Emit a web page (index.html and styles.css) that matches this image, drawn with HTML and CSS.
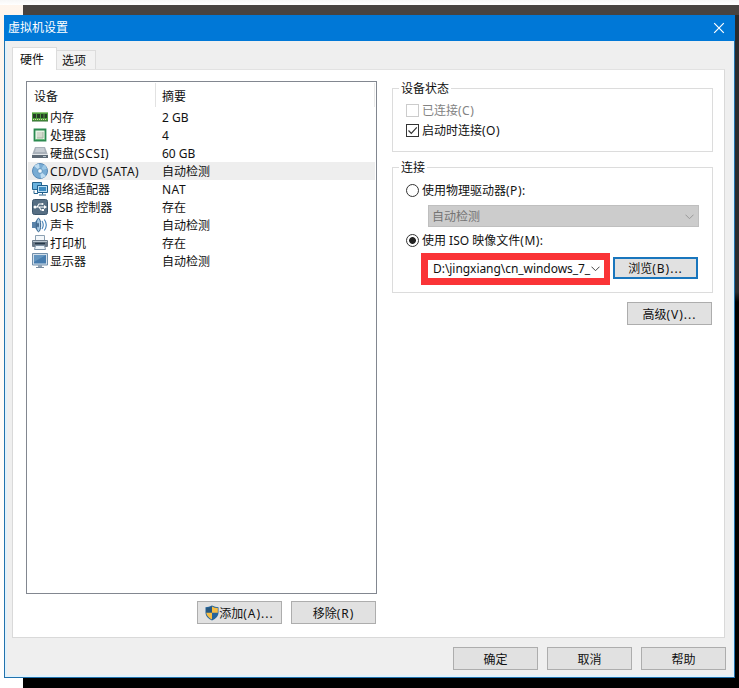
FILE: index.html
```html
<!DOCTYPE html>
<html lang="zh-CN">
<head>
<meta charset="utf-8">
<title>虚拟机设置</title>
<link rel="stylesheet" href="styles.css">
</head>
<body>
<main class="desktop">
<section class="window">
  <header class="titlebar"><h1>虚拟机设置</h1>
    <svg class="close" width="12" height="12" viewBox="0 0 12 12"><path d="M1.2 1.2l9.6 9.6M10.8 1.2l-9.6 9.6" stroke="#fff" stroke-width="1.2"/></svg>
  </header>
  <nav class="tabs"><span class="tab active">硬件</span><span class="tab">选项</span></nav>
  <div class="page">
    <div class="left">
      <div class="list">
        <div class="head"><span class="name">设备</span><span class="summary">摘要</span></div>
        <div class="row"><svg width="16" height="16" viewBox="0 0 16 16"><path d="M0 3h16v9H0z" fill="#4f9d3e"/><path d="M0 3h16v1H0z" fill="#8fc77b"/><path d="M1 5h3v4H1zM5 5h3v4H5zM9 5h2.500v4H9zM12.500 5H15v4h-2.500z" fill="#253c25"/><path d="M1 10.500h14" stroke="#d3dca0" stroke-dasharray="1 1"/><path d="M0 12h16" stroke="#2f6a2e"/></svg><span class="name">内存</span><span class="summary">2 GB</span></div>
        <div class="row"><svg width="16" height="16" viewBox="0 0 16 16"><path d="M2.500 2.500h11v11h-11z" fill="#e8f3e5" stroke="#2b8a50" stroke-width="1.800"/><path d="M5 5h6v6H5z" fill="#d3dacd"/><path d="M5 11h6V5" fill="none" stroke="#a7b5a3"/><path d="M3 12.500h10" stroke="#65b879"/></svg><span class="name">处理器</span><span class="summary">4</span></div>
        <div class="row"><svg width="16" height="16" viewBox="0 0 16 16"><path d="M3 2h10l3 8H0z" fill="#a9b1ba"/><path d="M4 3h8l1 4H3z" fill="#c5cbd2"/><path d="M0 9h16v4H0z" fill="#5d6975"/><path d="M0 9.500h16" stroke="#e2e6e9"/><path d="M11 11.500h3" stroke="#bac8d1"/></svg><span class="name">硬盘<b>(SCSI)</b></span><span class="summary">60 GB</span></div>
        <div class="row selected"><svg width="16" height="16" viewBox="0 0 16 16"><circle cx="8" cy="8" r="7.500" fill="#79acd4" stroke="#5788b4"/><path d="M8 8L2 3A8 8 0 0 1 7 .8zM8 8l6 5a8 8 0 0 1-5 2.300z" fill="#bedcf1"/><path d="M8 8l4-6.500a8 8 0 0 1 3 4z" fill="#9bc7e6"/><circle cx="8" cy="8" r="2.500" fill="#d6e7f3" stroke="#6699c1"/><circle cx="8" cy="8" r="1" fill="#fff"/></svg><span class="name"><b>CD/DVD (SATA)</b></span><span class="summary">自动检测</span></div>
        <div class="row"><svg width="16" height="16" viewBox="0 0 16 16"><path d="M.5 1.500h9v7h-9z" fill="#6bb3df" stroke="#26658f"/><path d="M2 12.500v-3M2 12.500h4" fill="none" stroke="#26658f"/><path d="M5.500 4.500h10v7h-10z" fill="#b9ddf2" stroke="#1f5f8d"/><path d="M7 6h7v4H7z" fill="#3e8cc1"/><path d="M10.500 12v1.500M7 14h7" stroke="#27618a"/></svg><span class="name">网络适配器</span><span class="summary"><b>NAT</b></span></div>
        <div class="row"><svg width="16" height="16" viewBox="0 0 16 16"><rect x=".5" y=".5" width="15" height="15" rx="2" fill="#566e83" stroke="#3c566c"/><path d="M2 8h11M5 8l2-3h3M7 8l2 3h2" fill="none" stroke="#fff" stroke-width="1.100"/><path d="M12 6l3 2-3 2z" fill="#fff"/><circle cx="3" cy="8" r="1.500" fill="#fff"/><circle cx="10.500" cy="5" r="1" fill="#fff"/><path d="M10 10h2v2h-2z" fill="#fff"/></svg><span class="name">USB 控制器</span><span class="summary">存在</span></div>
        <div class="row"><svg width="16" height="16" viewBox="0 0 16 16"><path d="M0 5h3l4-4v14l-4-4H0z" fill="#5a83a9"/><ellipse cx="6.500" cy="8" rx="2.200" ry="6.700" fill="#a9cbe5" stroke="#35648e"/><ellipse cx="6" cy="8" rx=".8" ry="2.500" fill="#2c5077"/><path d="M10 4q2.500 4 0 8M12.300 2.500q4 5.500 0 11" fill="none" stroke="#4381b8" stroke-width="1.100"/></svg><span class="name">声卡</span><span class="summary">自动检测</span></div>
        <div class="row"><svg width="16" height="16" viewBox="0 0 16 16"><path d="M3.500.5h9v5h-9z" fill="#f3f7fa" stroke="#8ba0b2"/><rect y="5" width="16" height="7" rx="1" fill="#6a7988"/><path d="M1 6.500h14" stroke="#b8c4ce"/><path d="M3 8.500h10" stroke="#25384a" stroke-width="1.500"/><path d="M3.500 10.500h9l1 4h-11z" fill="#edf4fa" stroke="#7c91a5"/></svg><span class="name">打印机</span><span class="summary">存在</span></div>
        <div class="row"><svg width="16" height="16" viewBox="0 0 16 16"><path d="M.5.500h15v11.500H.5z" fill="#d2dfeb" stroke="#718fab"/><path d="M2 2h12v8.500H2z" fill="#467cae"/><path d="M2 2h12L2 9z" fill="#6495c0"/><path d="M6 12h4v2H6z" fill="#8fa2b5"/><path d="M4 14.500h8" stroke="#758a9e"/></svg><span class="name">显示器</span><span class="summary">自动检测</span></div>
      </div>
      <div class="actions"><button><svg width="14" height="16" viewBox="0 0 14 16"><path d="M7 .5Q4 2.300.5 2.300V8Q.8 13 7 15.500 13.200 13 13.500 8V2.300Q10 2.300 7 .5z" fill="#25649b"/><path d="M7 1.500v6.200H1.200V3Q4.500 3 7 1.500z" fill="#26577e"/><path d="M7 1.500v6.200h5.800V3Q9.500 3 7 1.500zM7 7.700v6.800Q2 12 1.200 7.700z" fill="#f6bd45"/></svg><span>添加<b class="wide">(A)...</b></span></button><button><span>移除<b class="wide">(R)</b></span></button></div>
    </div>
    <div class="right">
      <div class="group status"><span class="legend">设备状态</span>
        <div class="option disabled"><i class="check"></i><span>已连接<b>(C)</b></span></div>
        <div class="option"><i class="check"><svg width="11" height="11" viewBox="0 0 11 11"><path d="M1.500 5.500L4.300 8.300 9.800 2.300" fill="none" stroke="#333" stroke-width="1.200"/></svg></i><span>启动时连接<b>(O)</b></span></div>
      </div>
      <div class="group connection"><span class="legend">连接</span>
        <div class="option"><i class="radio"></i><span>使用物理驱动器<b>(P):</b></span></div>
        <div class="select off"><span>自动检测</span><svg width="9" height="6" viewBox="0 0 9 6"><path d="M.5.7l4 4 4-4" fill="none" stroke="#999"/></svg></div>
        <div class="option iso"><i class="radio on"></i><span>使用 ISO 映像文件<b>(M):</b></span></div>
        <div class="isoline"><div class="highlight"><div class="select"><span class="path">D:\jingxiang\cn_windows_7_</span><svg width="9" height="6" viewBox="0 0 9 6"><path d="M.5.7l4 4 4-4" fill="none" stroke="#444"/></svg></div></div><button class="focus"><span>浏览<b class="wide">(B)...</b></span></button></div>
      </div>
      <button class="advanced"><span>高级<b class="wide">(V)...</b></span></button>
    </div>
  </div>
  <footer><button>确定</button><button>取消</button><button>帮助</button></footer>
</section>
</main>
</body>
</html>
```
FILE: styles.css
```css
* { box-sizing: border-box; }
body { margin: 0; font: 12px/18px "Noto Sans", "Noto Sans CJK SC", sans-serif; color: #111; }
svg { display: block; flex: none; }
b { font-weight: 400; letter-spacing: .5px; }
b.wide { letter-spacing: 1px; }
.desktop {
  width: 739px; height: 688px; padding: 15px 4px 10px; overflow: hidden;
  background:
    linear-gradient(#f7f7f7, #fff) 0 0 / 739px 5px no-repeat,
    linear-gradient(#fff5ec, #fff) 0 0 / 23px 688px no-repeat,
    linear-gradient(#484340 0 15px, #292b2d 15px 292px, #000 302px);
}
.window { width: 731px; height: 663px; background: #efefef; border: 1px solid #2172ad; border-top: 0; box-shadow: inset 0 0 0 2px #e1f1fb; }
.titlebar { display: flex; align-items: center; justify-content: space-between; height: 26px; margin: 0 -1px; padding: 0 10px 0 4px; background: #0078d7; color: #fff; }
h1 { margin: 0; font: inherit; }
.tabs { display: flex; align-items: flex-end; height: 28px; margin-left: 7px; }
.tab { height: 19px; width: 39px; padding: 0 5px; border: 1px solid #dcdcdc; border-width: 1px 1px 0 0; background: #f2f2f2; line-height: 20px; }
.tab.active { position: relative; width: 45px; height: 23px; margin-bottom: -1px; padding: 0 7px; border-left-width: 1px; background: #fff; line-height: 23px; }
.page { display: flex; gap: 15px; width: 713px; height: 569px; margin-left: 7px; padding: 11px 11px 0 13px; background: #fff; border: 1px solid #d9d9d9; border-top-color: #e2e2e2; }
.list { width: 351px; height: 513px; padding: 0 1px; border: 1px solid #828790; }
.head { display: flex; height: 26px; padding: 1px 0 1px 6px; line-height: 27px; }
.head .name { width: 122px; border-right: 1px solid #e2e2e2; }
.head .summary { flex: 1; padding-left: 6px; border-right: 1px solid #e8e8e8; }
.row { display: flex; align-items: center; height: 18px; padding-left: 4px; }
.row .name { width: 111px; margin-left: 2px; margin-right: 1px; white-space: nowrap; }
.row span { line-height: 19px; }
.row.selected { background: #eee; }
.actions { display: flex; justify-content: flex-end; gap: 9px; margin: 7px 1px 0 0; }
button { display: flex; align-items: center; justify-content: center; width: 85px; height: 23px; padding: 2px 0 0; font: inherit; color: #111; background: #e1e1e1; border: 1px solid #adadad; }
button svg { margin-top: -2px; }
.right { width: 321px; padding-top: 7px; }
.group { border: 1px solid #dcdcdc; padding-left: 13px; }
.legend { display: block; width: max-content; height: 18px; margin: -9px 0 0 -7px; padding: 0 2px; background: #fff; }
.status { height: 64px; }
.connection { height: 126px; margin-top: 15px; }
.option { display: flex; align-items: center; height: 20px; gap: 3px; }
.legend + .option { margin-top: 2px; }
.connection .legend + .option { margin-top: 3px; }
.option span { padding-top: 2px; }
.disabled { color: #838383; }
.check, .radio { width: 13px; height: 13px; border: 1px solid #333; background: #fff; }
.disabled .check { border-color: #ccc; }
.radio { border-radius: 50%; }
.radio.on { background: radial-gradient(circle, #222 0 3px, #fff 3.8px); }
.select { display: flex; align-items: center; justify-content: space-between; height: 22px; padding: 0 4px; background: #fff; }
.off { width: 271px; margin: 5px 0 0 22px; padding: 2px 4px 0 3px; background: #ccc; border: 1px solid #bfbfbf; color: #747474; }
.iso { margin-top: 3px; }
.isoline { display: flex; align-items: flex-start; gap: 3px; margin: 3px 0 0 15px; }
.highlight { width: 189px; height: 32px; padding: 7px 6px 7px 7px; background: #fa3437; }
.highlight .select { height: 18px; padding-left: 5px; }
.path { letter-spacing: -.05px; white-space: nowrap; }
.focus { border: 2px solid #1976bd; height: 22px; margin-top: 4px; }
.advanced { margin: 9px 0 0 235px; }
footer { display: flex; justify-content: flex-end; gap: 9px; padding: 9px 8px 0 0; }
```
